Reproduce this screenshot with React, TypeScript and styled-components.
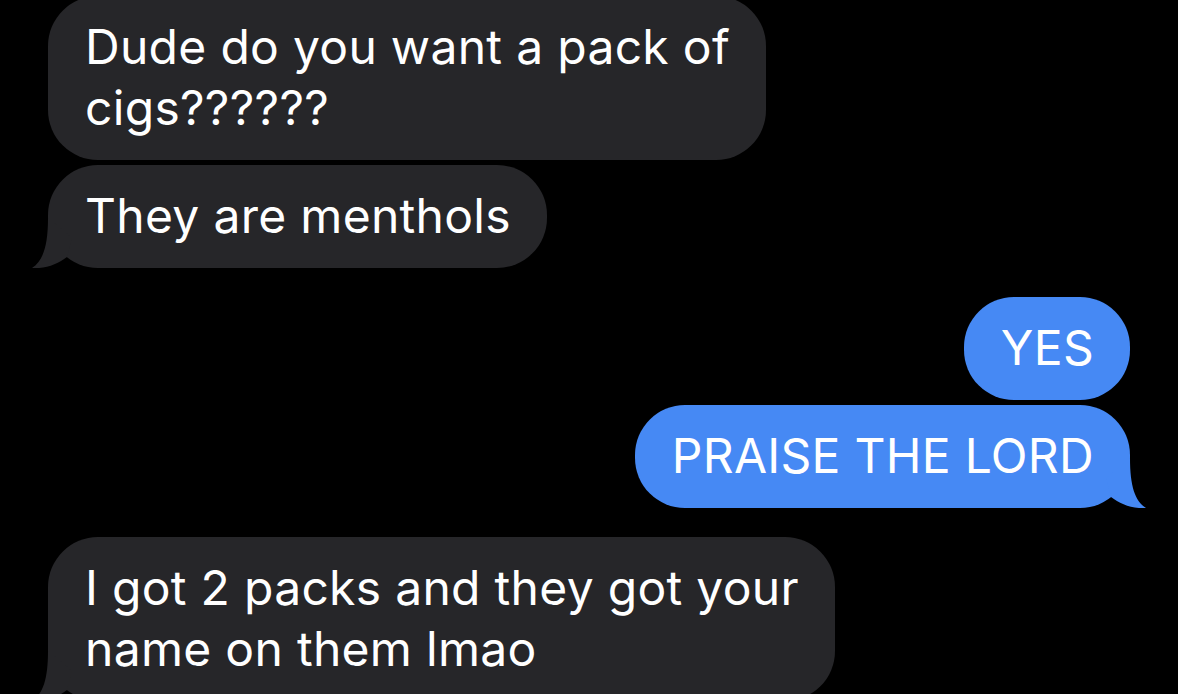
import React from 'react';
import styled, {createGlobalStyle} from "styled-components";

const GlobalStyle = createGlobalStyle`
    html, body {
        margin: 0;
        padding: 0;
        background: #000;
        overflow: hidden;
    }
`

type Side = 'in' | 'out';

type Msg = {
    side: Side;
    text: string;
    tail?: boolean;
};

const messages: Msg[] = [
    {side: 'in', text: 'Dude do you want a pack of\ncigs??????'},
    {side: 'in', text: 'They are menthols', tail: true},
    {side: 'out', text: 'YES'},
    {side: 'out', text: 'PRAISE THE LORD', tail: true},
    {side: 'in', text: 'I got 2 packs and they got your\nname on them lmao', tail: true},
];

const colors = {
    in: '#262629',
    out: '#4689f4',
};

const Tail = ({side}: { side: Side }) => (
    <TailSvg $side={side} width="40" height="50" viewBox="0 0 40 50">
        <path d="M16,0 C16,28 11,43 0,50 C14,51 26,46 35,39 L40,20 L16,0 Z"
              fill={colors[side]}/>
    </TailSvg>
);

export default function App() {
    return (
        <>
            <GlobalStyle/>
            <Thread>
                {messages.map((m, i) => {
                    const prev = messages[i - 1];
                    const grouped = !!prev && prev.side === m.side;
                    return (
                        <Row key={i} $side={m.side} $grouped={grouped} $first={i === 0}>
                            <Bubble $side={m.side}>
                                {m.text}
                                {m.tail && <Tail side={m.side}/>}
                            </Bubble>
                        </Row>
                    );
                })}
            </Thread>
        </>
    );
}

const Thread = styled.main`
    display: flex;
    flex-direction: column;
    padding: 0 48px;
    font-family: Inter, "Noto Sans", sans-serif;
`

const Row = styled.div<{ $side: Side; $grouped: boolean; $first: boolean }>`
    display: flex;
    justify-content: ${p => p.$side === 'in' ? 'flex-start' : 'flex-end'};
    margin-top: ${p => p.$first ? '-4px' : p.$grouped ? '5px' : '29px'};
`

const Bubble = styled.div<{ $side: Side }>`
    position: relative;
    background: ${p => colors[p.$side]};
    color: #fff;
    border-radius: 50px;
    padding: 20px 36px 22px 37px;
    font-size: 48px;
    line-height: 61px;
    letter-spacing: 0.3px;
    white-space: pre-line;
`

const TailSvg = styled.svg<{ $side: Side }>`
    position: absolute;
    bottom: 0;
    ${p => p.$side === 'in' ? 'left: -16px;' : 'right: -16px; transform: scaleX(-1);'}
`
